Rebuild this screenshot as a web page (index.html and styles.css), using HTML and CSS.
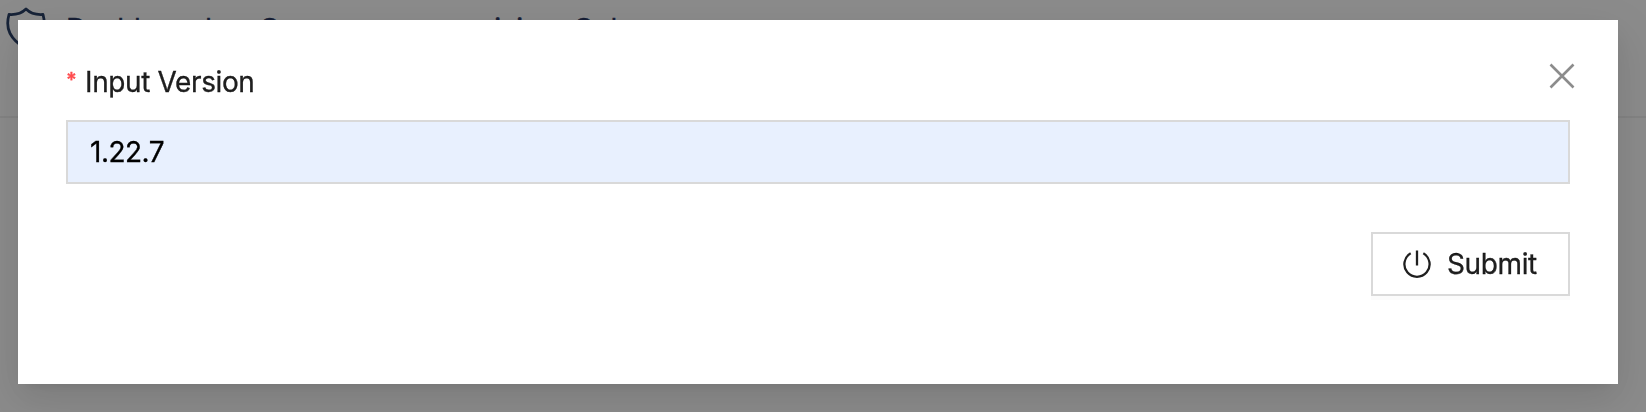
FILE: index.html
```html
<!DOCTYPE html>
<html lang="en">
<head>
<meta charset="utf-8">
<title>Input Version</title>
<link rel="stylesheet" href="styles.css">
</head>
<body>
<header class="topbar">
  <svg class="shield" viewBox="0 0 40 44"><path d="M20 2 C16 6 10 8 3 7.500 C-1 22 4 32 20 42 C36 32 41 22 37 7.500 C30 8 24 6 20 2Z"/></svg>
  <div class="brand"><span>Dashboard</span><span>on</span><span>Consumer</span><span>revision</span><span>Cube</span></div>
</header>
<div class="mask"></div>
<section class="modal" role="dialog">
  <button class="close" aria-label="Close"><svg viewBox="0 0 26 26"><path d="M1.500 1.500 24.500 24.500M24.500 1.500 1.500 24.500"/></svg></button>
  <label class="label" for="version"><span class="required">*</span>Input Version</label>
  <input class="field" id="version" value="1.22.7">
  <div class="actions">
    <button class="submit"><svg viewBox="0 0 28 28"><path d="M7.700 3.300A12.600 12.600 0 1 0 20.300 3.300M14 .5V15.500"/></svg><span>Submit</span></button>
  </div>
</section>
</body>
</html>
```
FILE: styles.css
```css
* { box-sizing: border-box; }
body { margin: 0; height: 412px; overflow: hidden; background: #fff; font-family: Inter, "Liberation Sans", sans-serif; font-size: 28px; letter-spacing: -.38px; color: rgba(0,0,0,.88); -webkit-text-stroke: .3px currentColor; }
.topbar { display: flex; align-items: flex-start; height: 118px; padding: 7px 6px; border-bottom: 2px solid #f0f0f0; color: #2b3a63; }
.shield { flex: none; width: 40px; height: 44px; fill: none; stroke: #2b4066; stroke-width: 2.8; stroke-linejoin: round; }
.brand { display: grid; grid-template-columns: 155px 38px 193px 121px auto; margin: 5px 0 0 20px; line-height: 34px; letter-spacing: .2px; white-space: nowrap; }
.mask { position: fixed; inset: 0; background: rgba(0,0,0,.45); }
.modal { position: absolute; left: 18px; top: 20px; width: 1600px; height: 364px; padding: 40px 48px; background: #fff; box-shadow: 0 6px 12px -8px rgba(0,0,0,.12), 0 12px 32px rgba(0,0,0,.08), 0 18px 56px 16px rgba(0,0,0,.05); }
.close { position: absolute; right: 43px; top: 43px; width: 26px; height: 26px; padding: 0; border: 0; background: none; }
.close svg { display: block; width: 26px; height: 26px; fill: none; stroke: #8c8c8c; stroke-width: 2.6; }
.label { display: flex; height: 44px; line-height: 45px; }
.required { width: 19px; color: #ff4d4f; font-size: 20px; font-weight: 600; line-height: 40px; }
.field { display: block; width: 100%; height: 64px; margin-top: 16px; padding: 0 22px; border: 2px solid #d9d9d9; border-radius: 0; outline: 0; background: #e8f0fe; color: #000; font: inherit; letter-spacing: -.5px; }
.actions { display: flex; justify-content: flex-end; margin-top: 48px; }
.submit { display: flex; align-items: center; gap: 16px; width: 199px; height: 64px; padding: 0 30px; border: 2px solid #d9d9d9; background: #fff; color: inherit; font: inherit; letter-spacing: inherit; box-shadow: 0 4px 0 rgba(0,0,0,.016); }
.submit svg { flex: none; width: 28px; height: 28px; fill: none; stroke: currentColor; stroke-width: 2.3; }
```
